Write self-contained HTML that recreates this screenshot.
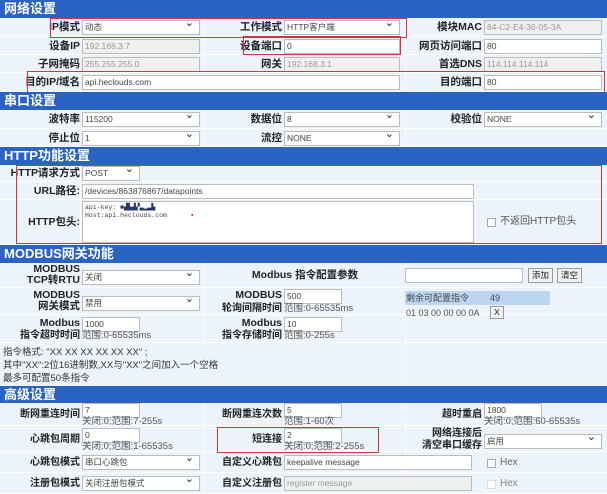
<!DOCTYPE html>
<html><head><meta charset="utf-8"><style>
*{box-sizing:border-box;margin:0;padding:0}
body{width:607px;height:494px;overflow:hidden;background:#fff;font-family:"Liberation Sans","Noto Sans CJK SC",sans-serif;position:relative;color:#222}
.a{position:absolute}
.h{position:absolute;left:0;width:607px;background:#2b63c2;color:#fff;font-weight:bold;font-size:13px;padding-left:4px;line-height:18px}
.r{position:absolute;left:0;width:607px;background:#edf3fa;border-bottom:1px solid #fff}
.l{position:absolute;font-size:10.5px;font-weight:bold;text-align:right;color:#222;white-space:nowrap;line-height:15px}
.i{position:absolute;height:15px;border:1px solid #bbb;background:#fff;font-size:8.5px;color:#444;padding-left:2px;line-height:13px;white-space:nowrap;overflow:hidden}
.g{background:#f0f0f0;color:#999}
.s::after{content:"⌄";position:absolute;right:5px;top:-4px;font-size:11px;color:#222}
.v{position:absolute;width:1px;background:#fff}
.red{position:absolute;border:1.5px solid #d8323a}
.sm{position:absolute;font-size:9.5px;color:#555;white-space:nowrap;line-height:12px}
.cb{position:absolute;width:9px;height:9px;border:1px solid #aaa;background:#fff}
.btn{position:absolute;height:15px;border:1px solid #999;background:#f2f2f2;font-size:8.5px;line-height:13px;padding:0 3px}
</style></head><body>
<div class="h" style="top:0;height:18px">网络设置</div>
<div class="r" style="top:18px;height:19px"></div>
<div class="r" style="top:37px;height:18px"></div>
<div class="r" style="top:55px;height:18px"></div>
<div class="r" style="top:73px;height:19px"></div>
<div class="v" style="left:203px;top:18px;height:55px"></div>
<div class="v" style="left:405px;top:18px;height:74px"></div>
<div class="l" style="right:527px;top:20px">IP模式</div><div class="i s" style="left:82px;top:20px;width:118px">动态</div>
<div class="l" style="right:325px;top:20px">工作模式</div><div class="i s" style="left:284px;top:20px;width:116px">HTTP客户端</div>
<div class="l" style="right:125px;top:20px">模块MAC</div><div class="i g" style="left:484px;top:20px;width:118px">84-C2-E4-36-05-3A</div>
<div class="l" style="right:527px;top:39px">设备IP</div><div class="i g" style="left:82px;top:39px;width:118px">192.168.3.7</div>
<div class="l" style="right:325px;top:39px">设备端口</div><div class="i" style="left:284px;top:39px;width:116px">0</div>
<div class="l" style="right:125px;top:39px">网页访问端口</div><div class="i" style="left:484px;top:39px;width:118px">80</div>
<div class="l" style="right:527px;top:57px">子网掩码</div><div class="i g" style="left:82px;top:57px;width:118px">255.255.255.0</div>
<div class="l" style="right:325px;top:57px">网关</div><div class="i g" style="left:284px;top:57px;width:116px">192.168.3.1</div>
<div class="l" style="right:125px;top:57px">首选DNS</div><div class="i g" style="left:484px;top:57px;width:118px">114.114.114.114</div>
<div class="l" style="right:527px;top:75px">目的IP/域名</div><div class="i" style="left:82px;top:75px;width:318px">api.heclouds.com</div>
<div class="l" style="right:125px;top:75px">目的端口</div><div class="i" style="left:484px;top:75px;width:118px">80</div>
<div class="red" style="left:50px;top:18px;width:357px;height:20px"></div>
<div class="red" style="left:243px;top:36px;width:158px;height:19px"></div>
<div class="red" style="left:27px;top:71px;width:578px;height:22px"></div>

<div class="h" style="top:92px;height:18px">串口设置</div>
<div class="r" style="top:110px;height:19px"></div>
<div class="r" style="top:129px;height:18px"></div>
<div class="v" style="left:203px;top:110px;height:37px"></div><div class="v" style="left:405px;top:110px;height:37px"></div>
<div class="l" style="right:527px;top:112px">波特率</div><div class="i s" style="left:82px;top:112px;width:118px">115200</div>
<div class="l" style="right:325px;top:112px">数据位</div><div class="i s" style="left:284px;top:112px;width:116px">8</div>
<div class="l" style="right:125px;top:112px">校验位</div><div class="i s" style="left:484px;top:112px;width:118px">NONE</div>
<div class="l" style="right:527px;top:131px">停止位</div><div class="i s" style="left:82px;top:131px;width:118px">1</div>
<div class="l" style="right:325px;top:131px">流控</div><div class="i s" style="left:284px;top:131px;width:116px">NONE</div>

<div class="h" style="top:147px;height:18px">HTTP功能设置</div>
<div class="r" style="top:165px;height:17px"></div>
<div class="r" style="top:182px;height:18px"></div>
<div class="r" style="top:200px;height:45px"></div>
<div class="v" style="left:80px;top:165px;height:80px"></div><div class="v" style="left:475px;top:182px;height:63px"></div>
<div class="l" style="right:527px;top:166px">HTTP请求方式</div><div class="i s" style="left:82px;top:166px;width:58px">POST</div>
<div class="l" style="right:527px;top:184px">URL路径:</div><div class="i" style="left:82px;top:184px;width:392px">/devices/863876867/datapoints</div>
<div class="l" style="right:527px;top:215px">HTTP包头:</div>
<div class="i" style="left:82px;top:201px;width:392px;height:42px;font-family:'Liberation Mono',monospace;font-size:6.5px;line-height:8px;padding-top:2px">api-key: <span style="color:#236">■▟▙▟▞▃▂▃▙</span><br>Host:api.heclouds.com &nbsp;&nbsp;&nbsp;&nbsp;&nbsp;<span style="color:#c00">▪</span></div>
<div class="cb" style="left:487px;top:218px"></div><div class="sm" style="left:500px;top:216px;font-size:10px">不返回HTTP包头</div>
<div class="red" style="left:16px;top:165px;width:586px;height:79px"></div>

<div class="h" style="top:245px;height:18px">MODBUS网关功能</div>
<div class="r" style="top:263px;height:25px"></div>
<div class="r" style="top:288px;height:27px"></div>
<div class="r" style="top:315px;height:28px"></div>
<div class="r" style="top:343px;height:43px;border:0"></div>
<div class="v" style="left:203px;top:263px;height:80px"></div><div class="v" style="left:405px;top:263px;height:123px"></div>
<div class="l" style="right:527px;top:264px;line-height:11px">MODBUS<br>TCP转RTU</div><div class="i s" style="left:82px;top:270px;width:118px">关闭</div>
<div class="l" style="left:205px;width:200px;text-align:center;top:268px">Modbus 指令配置参数</div>
<div class="i" style="left:405px;top:268px;width:118px"></div>
<div class="btn" style="left:528px;top:268px">添加</div><div class="btn" style="left:557px;top:268px">清空</div>
<div class="l" style="right:527px;top:290px;line-height:11px">MODBUS<br>网关模式</div><div class="i s" style="left:82px;top:296px;width:118px">禁用</div>
<div class="l" style="right:325px;top:289px;line-height:13px">MODBUS</div><div class="i" style="left:284px;top:289px;width:58px">500</div>
<div class="l" style="right:325px;top:303px;font-size:10px;line-height:12px">轮询间隔时间</div><div class="sm" style="left:284px;top:303px">范围:0-65535ms</div>
<div class="a" style="left:405px;top:291px;width:145px;height:14px;background:#bcd6f2;font-size:9px;line-height:14px;color:#444;padding-left:1px">剩余可配置指令<span style="position:absolute;left:85px">49</span></div>
<div class="sm" style="left:406px;top:307px;font-size:9px">01 03 00 00 00 0A</div><div class="btn" style="left:490px;top:306px;height:13px;line-height:11px">X</div>
<div class="l" style="right:527px;top:317px;line-height:13px">Modbus</div><div class="i" style="left:82px;top:317px;width:58px">1000</div>
<div class="l" style="right:527px;top:330px;font-size:10px;line-height:12px">指令超时时间</div><div class="sm" style="left:82px;top:330px">范围:0-65535ms</div>
<div class="l" style="right:325px;top:317px;line-height:13px">Modbus</div><div class="i" style="left:284px;top:317px;width:58px">10</div>
<div class="l" style="right:325px;top:330px;font-size:10px;line-height:12px">指令存储时间</div><div class="sm" style="left:284px;top:330px">范围:0-255s</div>
<div class="sm" style="left:3px;top:346px;color:#333;font-size:9.5px;line-height:13px">指令格式: "XX XX XX XX XX XX" ;<br>其中"XX":2位16进制数,XX与"XX"之间加入一个空格<br>最多可配置50条指令</div>

<div class="h" style="top:386px;height:17px">高级设置</div>
<div class="r" style="top:403px;height:23px"></div>
<div class="r" style="top:426px;height:26px"></div>
<div class="r" style="top:452px;height:21px"></div>
<div class="r" style="top:473px;height:21px"></div>
<div class="v" style="left:203px;top:403px;height:91px"></div><div class="v" style="left:405px;top:403px;height:91px"></div>
<div class="l" style="right:527px;top:407px;font-size:10px">断网重连时间</div><div class="i" style="left:82px;top:403px;width:58px">7</div><div class="sm" style="left:82px;top:416px">关闭:0;范围:7-255s</div>
<div class="l" style="right:325px;top:407px;font-size:10px">断网重连次数</div><div class="i" style="left:284px;top:403px;width:58px">5</div><div class="sm" style="left:284px;top:416px">范围:1-60次</div>
<div class="l" style="right:125px;top:407px;font-size:10px">超时重启</div><div class="i" style="left:484px;top:403px;width:58px">1800</div><div class="sm" style="left:484px;top:416px">关闭:0;范围:60-65535s</div>
<div class="l" style="right:527px;top:432px;font-size:10px">心跳包周期</div><div class="i" style="left:82px;top:428px;width:58px">0</div><div class="sm" style="left:82px;top:441px">关闭:0;范围:1-65535s</div>
<div class="l" style="right:325px;top:432px;font-size:10px">短连接</div><div class="i" style="left:284px;top:428px;width:58px">2</div><div class="sm" style="left:284px;top:441px">关闭:0;范围:2-255s</div>
<div class="l" style="right:125px;top:428px;font-size:10px;line-height:12px">网络连接后<br>清空串口缓存</div><div class="i s" style="left:484px;top:434px;width:118px">启用</div>
<div class="red" style="left:217px;top:427px;width:162px;height:26px"></div>
<div class="l" style="right:527px;top:455px;font-size:10px">心跳包模式</div><div class="i s" style="left:82px;top:455px;width:118px">串口心跳包</div>
<div class="l" style="right:325px;top:455px;font-size:10px">自定义心跳包</div><div class="i" style="left:284px;top:455px;width:188px">keepalive message</div>
<div class="cb" style="left:487px;top:459px"></div><div class="sm" style="left:500px;top:457px;font-size:10px;color:#666">Hex</div>
<div class="l" style="right:527px;top:476px;font-size:10px">注册包模式</div><div class="i s" style="left:82px;top:476px;width:118px">关闭注册包模式</div>
<div class="l" style="right:325px;top:476px;font-size:10px">自定义注册包</div><div class="i g" style="left:284px;top:476px;width:188px">register message</div>
<div class="cb" style="left:487px;top:480px;border-color:#ddd"></div><div class="sm" style="left:500px;top:478px;font-size:10px;color:#888">Hex</div>
</body></html>
